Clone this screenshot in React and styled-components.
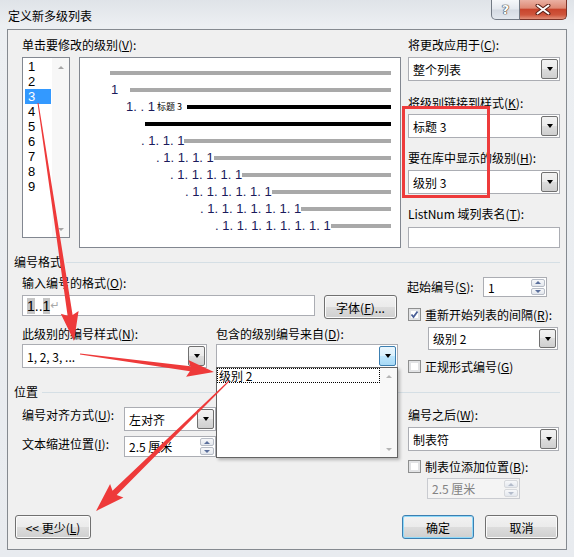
import React from 'react';
import styled, { createGlobalStyle } from 'styled-components';

const GlobalStyle = createGlobalStyle`
  html, body { margin: 0; padding: 0; background: #e6e9ed; }
  body {
    font-family: "Noto Sans CJK SC", "Microsoft YaHei", sans-serif;
    font-size: 12px;
    color: #000;
  }
`;

// ---------- window frame ----------
const Window = styled.div`
  position: relative;
  width: 574px;
  height: 557px;
  box-sizing: border-box;
  padding: 0 7px 7px 7px;
  display: flex;
  flex-direction: column;
  background: linear-gradient(180deg, #dfe3e8 0%, #eceff2 25px, #e8ebef 100%);
  overflow: hidden;
`;

const TitleBar = styled.div`
  flex: none;
  height: 29px;
  display: flex;
  justify-content: space-between;
  align-items: flex-start;
`;

const TitleText = styled.div`
  padding: 8px 0 0 1px;
  line-height: 16px;
`;

const Caption = styled.div`
  display: flex;
`;

const CaptionButton = styled.div`
  width: ${p => (p.$close ? 47 : 29)}px;
  height: 20px;
  box-sizing: border-box;
  border: 1px solid ${p => (p.$close ? '#7b3328' : '#727a84')};
  border-top: none;
  ${p => (p.$close ? 'border-left: none;' : '')}
  border-radius: ${p => (p.$close ? '0 0 5px 0' : '0 0 0 5px')};
  background: ${p =>
    p.$close
      ? 'linear-gradient(180deg, #eab1a3 0%, #de8a75 42%, #c8452d 50%, #cf553c 78%, #e2907a 100%)'
      : 'linear-gradient(180deg, #f6f8fa 0%, #e4e8ee 48%, #d4dae2 52%, #e3e8ee 100%)'};
  display: flex;
  align-items: center;
  justify-content: center;
  color: #fff;
  font-family: "DejaVu Sans", sans-serif;
  font-weight: bold;
  font-size: 13px;
  text-shadow: 0 0 1px #333, 0 0 1px #333, 0 0 1px #333;
`;

const Client = styled.div`
  flex: 1;
  position: relative;
  border: 1px solid #858a90;
  background: #f0f0f0;
  display: flex;
  flex-direction: column;
`;

// ---------- generic parts ----------
const Key = styled.span`
  text-decoration: underline;
`;

const Label = styled.div`
  height: 14px;
  line-height: 14px;
  white-space: nowrap;
  margin-top: ${p => p.$mt || 0}px;
  margin-left: ${p => p.$ml || 0}px;
  width: ${p => (p.$width ? `${p.$width}px` : 'auto')};
  padding-top: ${p => p.$pt || 0}px;
  flex: none;
`;

const Column = styled.div`
  display: flex;
  flex-direction: column;
  width: ${p => p.$width}px;
  flex: none;
`;

const Row = styled.div`
  display: flex;
  align-items: ${p => p.$align || 'flex-start'};
  gap: ${p => p.$gap || 0}px;
  margin-top: ${p => p.$mt || 0}px;
  height: ${p => (p.$height ? `${p.$height}px` : 'auto')};
`;

const SelectBox = styled.div`
  position: relative;
  display: flex;
  flex: none;
  box-sizing: border-box;
  width: ${p => (p.$width ? `${p.$width}px` : '100%')};
  height: ${p => p.$height || 24}px;
  margin-top: ${p => p.$mt || 0}px;
  margin-left: ${p => p.$ml || 0}px;
  border: 1px solid #abadb3;
  background: #fff;
`;

const SelectValue = styled.div`
  flex: 1;
  display: flex;
  align-items: center;
  padding-left: 4px;
  white-space: nowrap;
  overflow: hidden;
`;

const DropButton = styled.div`
  width: 17px;
  margin: 1px;
  box-sizing: border-box;
  border: 1px solid ${p => (p.$focused ? '#3c7fb1' : '#707070')};
  border-radius: 2px;
  background: ${p =>
    p.$focused
      ? 'linear-gradient(180deg, #eaf6fd 0%, #d9f0fc 50%, #bee6fd 50%, #a7d9f5 100%)'
      : 'linear-gradient(180deg, #f2f2f2 0%, #ebebeb 50%, #dddddd 50%, #cfcfcf 100%)'};
  display: flex;
  align-items: center;
  justify-content: center;
`;

const Triangle = styled.div`
  width: 0;
  height: 0;
  border-left: ${p => p.$size || 3.5}px solid transparent;
  border-right: ${p => p.$size || 3.5}px solid transparent;
  ${p => (p.$up ? 'border-bottom' : 'border-top')}: ${p => (p.$size ? p.$size : 4)}px solid ${p => p.$color || '#000'};
`;

const Select = ({ value, focused, children, ...rest }) => (
  <SelectBox {...rest}>
    <SelectValue>{value}</SelectValue>
    <DropButton $focused={focused}>
      <Triangle />
    </DropButton>
    {children}
  </SelectBox>
);

const TextField = styled.div`
  box-sizing: border-box;
  flex: none;
  width: ${p => (p.$width ? `${p.$width}px` : '100%')};
  height: ${p => p.$height || 21}px;
  margin-top: ${p => p.$mt || 0}px;
  border: 1px solid #abadb3;
  background: #fff;
  padding-left: 4px;
  display: flex;
  align-items: center;
  font-family: "Liberation Sans", Arial, sans-serif;
  font-size: 14px;
  white-space: pre;
`;

const Marked = styled.span`
  background: #c6c6c6;
`;

const ReturnMark = styled.span`
  color: #a8a8a8;
  font-family: "DejaVu Sans", sans-serif;
  font-size: 11px;
`;

const SpinBox = styled.div`
  box-sizing: border-box;
  flex: none;
  display: flex;
  width: ${p => p.$width}px;
  height: ${p => p.$height || 21}px;
  margin-top: ${p => p.$mt || 0}px;
  margin-left: ${p => p.$ml || 0}px;
  border: 1px solid ${p => (p.$disabled ? '#c9cbd0' : '#abadb3')};
  background: ${p => (p.$disabled ? '#f4f4f4' : '#fff')};
  color: ${p => (p.$disabled ? '#838383' : '#000')};
`;

const SpinButtons = styled.div`
  width: 14px;
  margin: 1px;
  display: flex;
  flex-direction: column;
  gap: 1px;
`;

const SpinBtn = styled.div`
  flex: 1;
  box-sizing: border-box;
  border: 1px solid ${p => (p.$disabled ? '#d6d8dc' : '#b7bcc6')};
  border-radius: 2px;
  background: linear-gradient(180deg, #f7f8fa, #e3e7ed);
  display: flex;
  align-items: center;
  justify-content: center;
`;

const Spin = ({ value, disabled, ...rest }) => (
  <SpinBox $disabled={disabled} {...rest}>
    <SelectValue>{value}</SelectValue>
    <SpinButtons>
      <SpinBtn $disabled={disabled}>
        <Triangle $up $size={3} $color={disabled ? '#b4bccb' : '#5a6f9c'} />
      </SpinBtn>
      <SpinBtn $disabled={disabled}>
        <Triangle $size={3} $color={disabled ? '#b4bccb' : '#5a6f9c'} />
      </SpinBtn>
    </SpinButtons>
  </SpinBox>
);

const CheckRow = styled.div`
  display: flex;
  align-items: center;
  gap: 4px;
  height: 16px;
  margin-top: ${p => p.$mt || 0}px;
  padding-left: 1px;
  white-space: nowrap;
`;

const CheckBox = styled.div`
  width: 13px;
  height: 13px;
  box-sizing: border-box;
  border: 1px solid #8e8f8f;
  background: #fff;
  box-shadow: inset 0 0 0 2px #e2e3e5;
  display: flex;
  align-items: center;
  justify-content: center;
`;

const Check = ({ checked, children, ...rest }) => (
  <CheckRow {...rest}>
    <CheckBox>
      {checked && (
        <svg width="9" height="9" viewBox="0 0 9 9">
          <polyline points="1.5,4.5 3.5,7 7.5,1.5" fill="none" stroke="#4a5f97" strokeWidth="1.8" />
        </svg>
      )}
    </CheckBox>
    <span>{children}</span>
  </CheckRow>
);

const Button = styled.div`
  box-sizing: border-box;
  width: ${p => p.$width}px;
  height: 24px;
  border: 1px solid ${p => (p.$default ? '#3c7fb1' : '#707070')};
  border-radius: 3px;
  background: linear-gradient(180deg, #f2f2f2 0%, #ebebeb 50%, #dddddd 50%, #cfcfcf 100%);
  box-shadow: inset 0 0 0 1px ${p => (p.$default ? '#8fd9f9' : '#fbfbfb')};
  display: flex;
  align-items: center;
  justify-content: center;
  white-space: nowrap;
  flex: none;
`;

// ---------- top area ----------
const TopSection = styled.div`
  display: flex;
  gap: 7px;
  padding: 8px 0 0 14px;
`;

const LevelList = styled.div`
  width: 48px;
  height: 181px;
  box-sizing: border-box;
  border: 1px solid #828790;
  background: #fff;
  display: flex;
`;

const LevelItems = styled.div`
  flex: 1;
  padding-top: 1px;
`;

const LevelItem = styled.div`
  height: 15px;
  line-height: 15px;
  margin: 0 1px 0 2px;
  padding-left: 3px;
  font-family: "Liberation Sans", Arial, sans-serif;
  font-size: 13px;
  background: ${p => (p.$selected ? '#3399ff' : 'transparent')};
  color: ${p => (p.$selected ? '#fff' : '#000')};
`;

const ScrollTrack = styled.div`
  width: 17px;
  background: ${p => p.$bg || '#f7f7f7'};
  display: flex;
  flex-direction: column;
  justify-content: space-between;
  align-items: center;
  padding: ${p => p.$pad || '8px 0 6px'};
  box-sizing: border-box;
`;

const Preview = styled.div`
  width: 322px;
  height: 191px;
  box-sizing: border-box;
  border: 1px solid #828790;
  background: #fff;
  padding-top: 6px;
`;

const PreviewRow = styled.div`
  display: flex;
  align-items: center;
  height: 17px;
  padding: 0 9px 0 ${p => p.$indent}px;
`;

const PreviewText = styled.span`
  font-family: "Liberation Sans", Arial, sans-serif;
  font-size: 13px;
  color: #1b1b5c;
  white-space: pre;
`;

const PreviewCaption = styled.span`
  font-size: 9px;
  margin-left: 2px;
  white-space: pre;
`;

const Bar = styled.div`
  flex: 1;
  height: 4px;
  margin-left: ${p => p.$gap || 0}px;
  background: ${p => (p.$dark ? '#000' : '#a9a9a9')};
`;

// ---------- groups ----------
const GroupHeader = styled.div`
  display: flex;
  align-items: center;
  gap: 4px;
  height: 14px;
  line-height: 14px;
  margin-top: ${p => p.$mt}px;
  padding: 0 6px;
  &::after {
    content: '';
    flex: 1;
    border-top: 1px solid #d5dfe5;
  }
`;

const GroupBody = styled.div`
  display: flex;
  gap: 6px;
  padding-left: 14px;
`;

const TwoCols = styled.div`
  display: grid;
  grid-template-columns: 185px 182px;
  column-gap: 9px;
  margin-top: 8px;
`;

const DropList = styled.div`
  position: absolute;
  left: -1px;
  top: 100%;
  width: 182px;
  height: 91px;
  box-sizing: border-box;
  border: 1px solid #646464;
  background: #fff;
  display: flex;
  z-index: 5;
  box-shadow: 2px 2px 3px rgba(0, 0, 0, 0.25);
`;

const DropItems = styled.div`
  flex: 1;
`;

const DropItem = styled.div`
  height: 15px;
  line-height: 13px;
  box-sizing: border-box;
  border: 1px dotted #000;
  padding-left: 1px;
`;

const ButtonBar = styled.div`
  display: flex;
  justify-content: space-between;
  margin-top: 16px;
  padding: 0 8px 0 7px;
`;

const ButtonPair = styled.div`
  display: flex;
  gap: 11px;
`;

// ---------- annotations ----------
const Overlay = styled.svg`
  position: absolute;
  left: 0;
  top: 0;
  pointer-events: none;
  z-index: 20;
`;

const HighlightFrame = styled.div`
  position: absolute;
  left: 402px;
  top: 106px;
  width: 88px;
  height: 92px;
  box-sizing: border-box;
  border: 3px solid #ee3b3b;
  pointer-events: none;
  z-index: 20;
`;

const arrowPoints = (x1, y1, x2, y2, w0 = 1, w1 = 6, len = 24, head = 18) => {
  const dx = x2 - x1;
  const dy = y2 - y1;
  const d = Math.hypot(dx, dy);
  const ux = dx / d;
  const uy = dy / d;
  const nx = -uy;
  const ny = ux;
  const bx = x2 - ux * len;
  const by = y2 - uy * len;
  const pts = [
    [x1 + (nx * w0) / 2, y1 + (ny * w0) / 2],
    [bx + (nx * w1) / 2, by + (ny * w1) / 2],
    [bx + (nx * head) / 2 - ux * 3, by + (ny * head) / 2 - uy * 3],
    [x2, y2],
    [bx - (nx * head) / 2 - ux * 3, by - (ny * head) / 2 - uy * 3],
    [bx - (nx * w1) / 2, by - (ny * w1) / 2],
    [x1 - (nx * w0) / 2, y1 - (ny * w0) / 2],
  ];
  return pts.map(p => p.map(v => v.toFixed(1)).join(',')).join(' ');
};

const previewRows = [
  { indent: 30 },
  { indent: 31, text: '1', gap: 12 },
  { indent: 46, text: '1. . 1', caption: '标题 3', gap: 5, dark: true },
  { indent: 65, dark: true },
  { indent: 61, text: '. 1. 1. 1' },
  { indent: 76, text: '. 1. 1. 1. 1' },
  { indent: 90, text: '. 1. 1. 1. 1. 1' },
  { indent: 105, text: '. 1. 1. 1. 1. 1. 1' },
  { indent: 120, text: '. 1. 1. 1. 1. 1. 1. 1' },
  { indent: 135, text: '. 1. 1. 1. 1. 1. 1. 1. 1' },
];

const levels = [1, 2, 3, 4, 5, 6, 7, 8, 9];

export default function App() {
  return (
    <>
      <GlobalStyle />
      <Window>
        <TitleBar>
          <TitleText>定义新多级列表</TitleText>
          <Caption>
            <CaptionButton>?</CaptionButton>
            <CaptionButton $close>
              <svg width="16" height="11" viewBox="0 0 16 11">
                <line x1="2.5" y1="1.5" x2="13.5" y2="9.5" stroke="#5b2219" strokeWidth="4" strokeLinecap="round" />
                <line x1="13.5" y1="1.5" x2="2.5" y2="9.5" stroke="#5b2219" strokeWidth="4" strokeLinecap="round" />
                <line x1="2.5" y1="1.5" x2="13.5" y2="9.5" stroke="#fff" strokeWidth="2" strokeLinecap="round" />
                <line x1="13.5" y1="1.5" x2="2.5" y2="9.5" stroke="#fff" strokeWidth="2" strokeLinecap="round" />
              </svg>
            </CaptionButton>
          </Caption>
        </TitleBar>

        <Client>
          <TopSection>
            <Column $width={379}>
              <Label>单击要修改的级别(<Key>V</Key>):</Label>
              <Row $gap={9} $mt={5}>
                <LevelList>
                  <LevelItems>
                    {levels.map(n => (
                      <LevelItem key={n} $selected={n === 3}>{n}</LevelItem>
                    ))}
                  </LevelItems>
                  <ScrollTrack>
                    <Triangle $up $size={3.5} $color="#a6a6a6" />
                    <Triangle $size={3.5} $color="#a6a6a6" />
                  </ScrollTrack>
                </LevelList>
                <Preview>
                  {previewRows.map((r, i) => (
                    <PreviewRow key={i} $indent={r.indent}>
                      {r.text && <PreviewText>{r.text}</PreviewText>}
                      {r.caption && <PreviewCaption>{r.caption}</PreviewCaption>}
                      <Bar $dark={r.dark} $gap={r.gap} />
                    </PreviewRow>
                  ))}
                </Preview>
              </Row>
            </Column>

            <Column $width={152}>
              <Label>将更改应用于(<Key>C</Key>):</Label>
              <Select $mt={5} value="整个列表" />
              <Label $mt={15}>将级别链接到样式(<Key>K</Key>):</Label>
              <Select $mt={4} value="标题 3" />
              <Label $mt={13}>要在库中显示的级别(<Key>H</Key>):</Label>
              <Select $mt={5} value="级别 3" />
              <Label $mt={13}>ListNum 域列表名(<Key>T</Key>):</Label>
              <TextField $mt={6} />
            </Column>
          </TopSection>

          <GroupHeader $mt={7}>编号格式</GroupHeader>
          <GroupBody>
            <Column $width={379}>
              <Label $mt={7}>输入编号的格式(<Key>O</Key>):</Label>
              <Row $gap={9} $mt={5}>
                <TextField $width={293}>
                  <Marked>1</Marked>..<Marked>1</Marked>
                  <ReturnMark>↵</ReturnMark>
                </TextField>
                <Button $width={73}>字体(<Key>F</Key>)...</Button>
              </Row>
              <TwoCols>
                <div>
                  <Label>此级别的编号样式(<Key>N</Key>):</Label>
                  <Select $mt={3} value="1, 2, 3, ..." />
                </div>
                <div>
                  <Label>包含的级别编号来自(<Key>D</Key>):</Label>
                  <Select $mt={3} value="" focused>
                    <DropList>
                      <DropItems>
                        <DropItem>级别 2</DropItem>
                      </DropItems>
                      <ScrollTrack $bg="#f8f8f8" $pad="7px 0 6px">
                        <Triangle $up $size={3.5} $color="#b5b5b5" />
                        <Triangle $size={3.5} $color="#b5b5b5" />
                      </ScrollTrack>
                    </DropList>
                  </Select>
                </div>
              </TwoCols>
            </Column>

            <Column $width={153}>
              <Row $align="center" $height={20} $mt={8}>
                <Label $width={76}>起始编号(<Key>S</Key>):</Label>
                <Spin $width={64} $height={20} value="1" />
              </Row>
              <Check $mt={9} checked>重新开始列表的间隔(<Key>R</Key>):</Check>
              <Select $mt={5} $ml={21} $width={130} $height={23} value="级别 2" />
              <Check $mt={8}>正规形式编号(<Key>G</Key>)</Check>
            </Column>
          </GroupBody>

          <GroupHeader $mt={11}>位置</GroupHeader>
          <GroupBody>
            <Column $width={379}>
              <Row $mt={8}>
                <Label $width={102} $pt={1}>编号对齐方式(<Key>U</Key>):</Label>
                <Select $width={92} value="左对齐" />
              </Row>
              <Row $mt={5}>
                <Label $width={102} $pt={1}>文本缩进位置(<Key>I</Key>):</Label>
                <Spin $width={92} value="2.5 厘米" />
              </Row>
            </Column>

            <Column $width={153}>
              <Label $mt={9} $ml={1}>编号之后(<Key>W</Key>):</Label>
              <Select $mt={5} $ml={1} $width={151} value="制表符" />
              <Check $mt={7}>制表位添加位置(<Key>B</Key>):</Check>
              <Spin $mt={4} $ml={20} $width={93} value="2.5 厘米" disabled />
            </Column>
          </GroupBody>

          <ButtonBar>
            <Button $width={76}>&lt;&lt; 更少(<Key>L</Key>)</Button>
            <ButtonPair>
              <Button $width={72} $default>确定</Button>
              <Button $width={73}>取消</Button>
            </ButtonPair>
          </ButtonBar>
        </Client>

        <HighlightFrame />
        <Overlay width="574" height="557" viewBox="0 0 574 557">
          <polygon points={arrowPoints(38, 103, 74, 341, 1, 5, 26, 18)} fill="#ee3a3a" />
          <polygon points={arrowPoints(80, 354, 214, 372, 1, 5, 24, 17)} fill="#ee3a3a" />
          <polygon points={arrowPoints(229, 381, 96, 511, 1, 6, 26, 19)} fill="#ee3a3a" />
        </Overlay>
      </Window>
    </>
  );
}
